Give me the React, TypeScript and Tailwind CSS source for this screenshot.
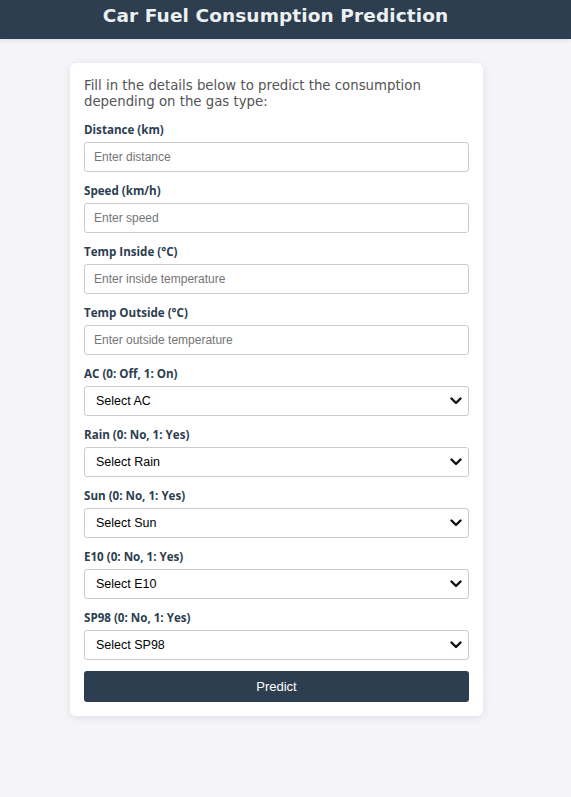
import React from "react";

const heading = { fontFamily: '"DejaVu Sans", Verdana, sans-serif' };
const labelFont = { fontFamily: '"Open Sans", "DejaVu Sans", sans-serif' };
const arial = { fontFamily: '"Liberation Sans", Arial, sans-serif' };

function Chevron() {
  return (
    <svg
      className="pointer-events-none absolute right-[7px] top-1/2 -translate-y-1/2"
      width="12"
      height="8"
      viewBox="0 0 12 8"
      fill="none"
    >
      <polyline
        points="1.5,1.5 6,6 10.5,1.5"
        stroke="#111"
        strokeWidth="2.4"
        strokeLinecap="round"
        strokeLinejoin="round"
      />
    </svg>
  );
}

const inputs = [
  { label: "Distance (km)", ph: "Enter distance" },
  { label: "Speed (km/h)", ph: "Enter speed" },
  { label: "Temp Inside (°C)", ph: "Enter inside temperature" },
  { label: "Temp Outside (°C)", ph: "Enter outside temperature" },
];

const selects = [
  { label: "AC (0: Off, 1: On)", v: "Select AC" },
  { label: "Rain (0: No, 1: Yes)", v: "Select Rain" },
  { label: "Sun (0: No, 1: Yes)", v: "Select Sun" },
  { label: "E10 (0: No, 1: Yes)", v: "Select E10" },
  { label: "SP98 (0: No, 1: Yes)", v: "Select SP98" },
];

function Label({ children }: { children: React.ReactNode }) {
  return (
    <label style={labelFont} className="mb-[5px] block pt-[1px] text-[11.6px] font-bold leading-[14px] text-[#2c3e50]">
      {children}
    </label>
  );
}

export default function App() {
  return (
    <div className="min-h-[797px] bg-[#f4f4f9]">
      <header className="flex h-[39px] items-center justify-center bg-[#2c3e50] pr-[20px] shadow-[0_2px_4px_rgba(0,0,0,0.08)]">
        <h1 style={heading} className="-mt-[7px] text-[18.5px] font-bold tracking-[0.1px] text-[#ecf0f1]">
          Car Fuel Consumption Prediction
        </h1>
      </header>
      <div className="pt-[24px]">
        <div className="ml-[70px] w-[413px] rounded-[6px] bg-white px-[14px] pb-[14px] pt-[15px] shadow-[0_2px_8px_rgba(0,0,0,0.09)]">
          <p style={heading} className="mb-[12px] text-[13.3px] leading-[16px] text-[#555]">
            Fill in the details below to predict the consumption depending on the gas type:
          </p>
          {inputs.map((f) => (
            <div key={f.label} className="mb-[11px]">
              <Label>{f.label}</Label>
              <input
                style={arial}
                placeholder={f.ph}
                className="block h-[30px] w-full rounded-[3px] border border-[#ccc] px-[9px] text-[12px] text-[#111] outline-none placeholder:text-[#757575]"
              />
            </div>
          ))}
          {selects.map((f) => (
            <div key={f.label} className="mb-[11px]">
              <Label>{f.label}</Label>
              <div className="relative">
                <select
                  style={arial}
                  defaultValue=""
                  className="block h-[30px] w-full appearance-none rounded-[3px] border border-[#ccc] bg-white px-[11px] text-[12.5px] text-black outline-none"
                >
                  <option value="">{f.v}</option>
                  <option value="0">0</option>
                  <option value="1">1</option>
                </select>
                <Chevron />
              </div>
            </div>
          ))}
          <button
            style={arial}
            className="block h-[31px] w-full rounded-[3px] bg-[#2c3e50] text-[13px] text-white"
          >
            Predict
          </button>
        </div>
      </div>
    </div>
  );
}
